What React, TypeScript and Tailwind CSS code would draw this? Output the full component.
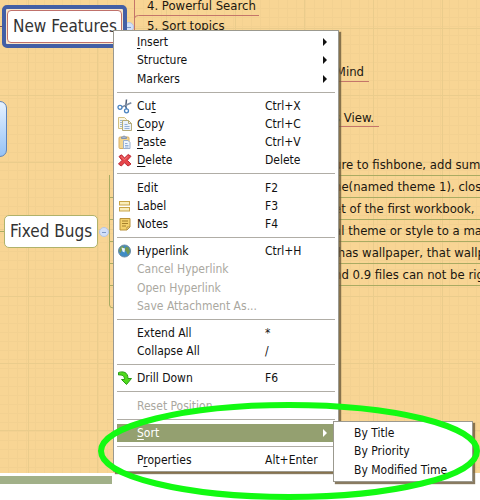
import React from "react";

type Item = {
  label: string;
  mnemonic?: number;
  shortcut?: string;
  icon?: React.ReactNode;
  disabled?: boolean;
  submenu?: boolean;
  active?: boolean;
};

const CutIcon = () => (
  <svg width="16" height="16" viewBox="0 0 16 16" fill="none">
    <path d="M9.5 1.5 8.7 9" stroke="#4f607a" strokeWidth="1.5" />
    <path d="M14.3 4.8 5 9" stroke="#7d8da3" strokeWidth="1.6" />
    <path d="M8.7 8.5 9.6 11" stroke="#2f5f96" strokeWidth="1.4" />
    <circle cx="3" cy="9.300" r="2" stroke="#4a83bf" strokeWidth="1.3" />
    <circle cx="9.500" cy="12.800" r="2" stroke="#4a83bf" strokeWidth="1.3" />
  </svg>
);
const CopyIcon = () => (
  <svg width="16" height="16" viewBox="0 0 16 16" fill="none">
    <path d="M1.500 1.500h6l2 2v9h-8z" fill="#fbf7e4" stroke="#d2c080" />
    <path d="M3 4.500h3M3 6.500h3M3 8.500h3M3 10.500h3" stroke="#9bb4d8" />
    <path d="M5.500 4.500h6l3 3v7h-9z" fill="#eaf1fc" stroke="#b5ab78" />
    <path d="M11.500 4.500v3h3" stroke="#b5ab78" />
    <path d="M7.500 8.500h3M7.500 10.500h5M7.500 12.500h5" stroke="#93afd8" />
  </svg>
);
const PasteIcon = () => (
  <svg width="16" height="16" viewBox="0 0 16 16" fill="none">
    <rect x="2" y="3" width="10" height="11.500" rx="1" fill="#f3d590" stroke="#d8ae62" />
    <path d="M4.500 4.500V3h1.300a1.300 1.300 0 0 1 2.500 0h1.200v1.500z" fill="#a9b8cf" stroke="#8494ae" />
    <path d="M6.500 6.500h4.500l2 2v6h-6.500z" fill="#eff5fd" stroke="#9bb0d0" />
    <path d="M8 9.500h2.500M8 11.500h3.500M8 13h3.500" stroke="#93afd8" />
  </svg>
);
const DeleteIcon = () => (
  <svg width="16" height="16" viewBox="0 0 16 16">
    <path
      d="M2 4.500 4.500 2.800 7.500 6l3.700-3.500 2.800 1.800-3.700 4 3.700 3.700-3 2-3.500-3.200L4.300 14l-2.800-2 3.500-3.700z"
      fill="#e6454a"
      stroke="#bd2833"
      strokeLinejoin="round"
    />
    <path d="M4 4.500 7.500 7.800l3.600-3.600" stroke="#f07f7f" fill="none" />
  </svg>
);
const LabelIcon = () => (
  <svg width="16" height="16" viewBox="0 0 16 16">
    <rect x="2.500" y="3.500" width="10" height="3.500" fill="#fbeebb" stroke="#c9a548" />
    <rect x="2.500" y="9.500" width="10" height="3.500" fill="#fbeebb" stroke="#c9a548" />
  </svg>
);
const NotesIcon = () => (
  <svg width="16" height="16" viewBox="0 0 16 16" fill="none">
    <path d="M3 2.500h10v8.500l-3 3H3z" fill="#f3d06a" stroke="#b9923a" />
    <path d="M5 5h6M5 7.500h6M5 10h4" stroke="#a5802c" />
    <path d="M13 11h-3v3z" fill="#fdf0b8" stroke="#b9923a" />
  </svg>
);
const GlobeIcon = () => (
  <svg width="16" height="16" viewBox="0 0 16 16">
    <circle cx="7.500" cy="8" r="6" fill="#3f8cc4" stroke="#6a8aa3" />
    <path d="M3 5C5 2.500 6.500 3 7 4.500L5 7l-1.500 3L2 8zM9 3.500l2.500 1 1.500 4-2 3.500-1.500-3-2-2z" fill="#75984f" />
    <path d="M4.500 4.500 8 5.500 7.500 9.500l-2-1z" fill="#e9f4fb" />
  </svg>
);
const DrillIcon = () => (
  <svg width="16" height="16" viewBox="0 0 16 16">
    <path
      d="M1.500 2.500C6 1 11 2 11 8.500h3.500L9.500 14.500 4.500 9.500h3C7.500 6 5.500 4.500 1.500 5z"
      fill="#4fdb1c"
      stroke="#2a9a16"
      strokeLinejoin="round"
    />
  </svg>
);

const groups: Item[][] = [
  [
    { label: "Insert", mnemonic: 0, submenu: true },
    { label: "Structure", submenu: true },
    { label: "Markers", submenu: true },
  ],
  [
    { label: "Cut", mnemonic: 2, shortcut: "Ctrl+X", icon: <CutIcon /> },
    { label: "Copy", mnemonic: 0, shortcut: "Ctrl+C", icon: <CopyIcon /> },
    { label: "Paste", mnemonic: 0, shortcut: "Ctrl+V", icon: <PasteIcon /> },
    { label: "Delete", mnemonic: 0, shortcut: "Delete", icon: <DeleteIcon /> },
  ],
  [
    { label: "Edit", shortcut: "F2" },
    { label: "Label", shortcut: "F3", icon: <LabelIcon /> },
    { label: "Notes", shortcut: "F4", icon: <NotesIcon /> },
  ],
  [
    { label: "Hyperlink", shortcut: "Ctrl+H", icon: <GlobeIcon /> },
    { label: "Cancel Hyperlink", disabled: true },
    { label: "Open Hyperlink", disabled: true },
    { label: "Save Attachment As...", disabled: true },
  ],
  [
    { label: "Extend All", shortcut: "*" },
    { label: "Collapse All", shortcut: "/" },
  ],
  [{ label: "Drill Down", shortcut: "F6", icon: <DrillIcon /> }],
  [{ label: "Reset Position", disabled: true }],
  [{ label: "Sort", mnemonic: 0, submenu: true, active: true }],
  [{ label: "Properties", mnemonic: 1, shortcut: "Alt+Enter" }],
];

function MenuRow({ item }: { item: Item }) {
  const m = item.mnemonic;
  const tone = item.active
    ? "bg-[#94a070] text-white"
    : item.disabled
      ? "text-[#aaa89f]"
      : "text-[#111]";
  return (
    <button
      type="button"
      role="menuitem"
      disabled={item.disabled}
      className={`grid flex-1 grid-cols-[20px_128px_1fr_8px] items-center pr-1 text-left ${tone}`}
    >
      <span>{item.icon}</span>
      <span className="whitespace-nowrap">
        {m === undefined ? (
          item.label
        ) : (
          <>
            {item.label.slice(0, m)}
            <u className="underline-offset-2">{item.label[m]}</u>
            {item.label.slice(m + 1)}
          </>
        )}
      </span>
      <span>{item.shortcut}</span>
      <span>
        {item.submenu && (
          <svg width="4" height="8" viewBox="0 0 4 8">
            <path d="M0 0v8l4-4z" fill="currentColor" />
          </svg>
        )}
      </span>
    </button>
  );
}

function ContextMenu() {
  return (
    <div
      role="menu"
      className="absolute left-[113px] top-[30px] flex h-[442px] w-[226px] flex-col border border-[#9b998f] bg-white px-[3px] py-[2px] shadow-[2px_2px_1px_#6b5a3acc]"
    >
      {groups.map((group, i) => (
        <React.Fragment key={group[0].label}>
          {i > 0 && <hr className="my-1 border-[#b0ada6]" />}
          {group.map((item) => (
            <MenuRow key={item.label} item={item} />
          ))}
        </React.Fragment>
      ))}
    </div>
  );
}

function SortMenu() {
  return (
    <div
      role="menu"
      className="absolute left-[333px] top-[421px] flex h-[61px] w-[140px] flex-col border border-[#9b998f] bg-white py-[2px] text-[#111] shadow-[2px_2px_1px_#6b5a3acc]"
    >
      {["By Title", "By Priority", "By Modified Time"].map((t) => (
        <button key={t} type="button" role="menuitem" className="flex-1 pl-5 text-left whitespace-nowrap">
          {t}
        </button>
      ))}
    </div>
  );
}

function Collapse({ className }: { className: string }) {
  return (
    <button
      type="button"
      aria-label="Collapse branch"
      className={`absolute flex size-[10px] items-center justify-center rounded-full border border-[#b4c5e6] bg-[#d3e0f8] ${className}`}
    >
      <span className="h-px w-1 bg-[#7f99c8]" />
    </button>
  );
}

const bugs = [
  "ure to fishbone, add summ",
  "ne(named theme 1), close",
  "et of the first workbook,",
  "al theme or style to a map",
  "\u00a0has wallpaper, that wallp",
  "nd 0.9 files can not be rig",
];

export default function App() {
  return (
    <main className="relative flex h-screen flex-col overflow-hidden bg-white font-['DejaVu_Sans_Condensed','DejaVu_Sans',sans-serif] text-[12px] leading-[18px]">
      <section className="relative flex-1 overflow-hidden bg-[#f8d594] text-[13px] text-[#1c1710]">
        <svg className="absolute inset-0 size-full" aria-hidden="true">
          <defs>
            <pattern id="fine" width="9" height="9" patternUnits="userSpaceOnUse">
              <path d="M8.500 0v9M0 8.500h9" stroke="#f3d191" strokeWidth="1" />
            </pattern>
            <pattern id="major" x="28" y="28" width="69" height="67" patternUnits="userSpaceOnUse">
              <path d="M.5 0v67M0 .5h69" stroke="#eacc8c" strokeWidth="1" />
            </pattern>
          </defs>
          <rect width="100%" height="100%" fill="url(#fine)" />
          <rect width="100%" height="100%" fill="url(#major)" />
          <path d="M134.500 0v30M134.500 18.500q0-3 4-3H259M330 81.500h39M330 126.500h49" stroke="#c4756a" fill="none" />
          <path d="M0 26.500h4" stroke="#7d5160" />
          <path
            d="M0 231.500h4M109.500 175v130q0 3 4 3M109.500 197.500h5M109.500 219.500h5M109.500 241.500h5M109.500 263.500h5M109.500 285.500h5"
            stroke="#a9ab62"
            fill="none"
          />
        </svg>

        <div className="absolute left-[147px] top-[-4px] leading-[20px] whitespace-nowrap">
          <p>4. Powerful Search</p>
          <p>5. Sort topics</p>
        </div>
        <div className="absolute right-[116px] top-[49px] flex flex-col items-end leading-[46px] whitespace-nowrap">
          <p>Mind</p>
          <p className="-mr-[10px]">s View.</p>
        </div>

        <ul className="absolute left-[334px] right-0 top-[154px]">
          {bugs.map((bug) => (
            <li key={bug} className="h-[22px] border-b border-[#a9ab62] leading-[22px] whitespace-nowrap">
              {bug}
            </li>
          ))}
        </ul>

        <Collapse className="left-[124px] top-[22px]" />
        <Collapse className="left-[99px] top-[227px]" />
        <div className="absolute left-[2px] top-[5px] rounded-[5px] border-4 border-[#435fa5] bg-[#f8e6cc] p-px">
          <div className="h-[33px] w-[115px] rounded-[4px] border border-[#c0716b] bg-white pl-[5px] text-[17px] leading-[31px] whitespace-nowrap text-[#333]">
            New Features
          </div>
        </div>
        <div className="absolute left-[4px] top-[215px] h-[33px] w-[94px] rounded-[5px] border border-[#b0b26a] bg-white pl-[5px] text-[17px] leading-[31px] whitespace-nowrap text-[#333]">
          Fixed Bugs
        </div>
        <div className="absolute left-[-20px] top-[101px] h-[56px] w-[27px] rounded-[7px] border border-[#5d83bb] bg-linear-to-b from-[#e6f2ff] to-[#96c2f5]" />
      </section>
      <footer className="h-[27px] bg-white pt-[3px]">
        <div className="h-2 w-[112px] bg-[#a1b088]" />
      </footer>

      <ContextMenu />
      <SortMenu />
      <svg className="pointer-events-none absolute left-0 top-0" width="480" height="500" viewBox="0 0 480 500" fill="none">
        <ellipse cx="289" cy="451" rx="188" ry="46" stroke="#12fa12" strokeWidth="6" />
      </svg>
    </main>
  );
}
